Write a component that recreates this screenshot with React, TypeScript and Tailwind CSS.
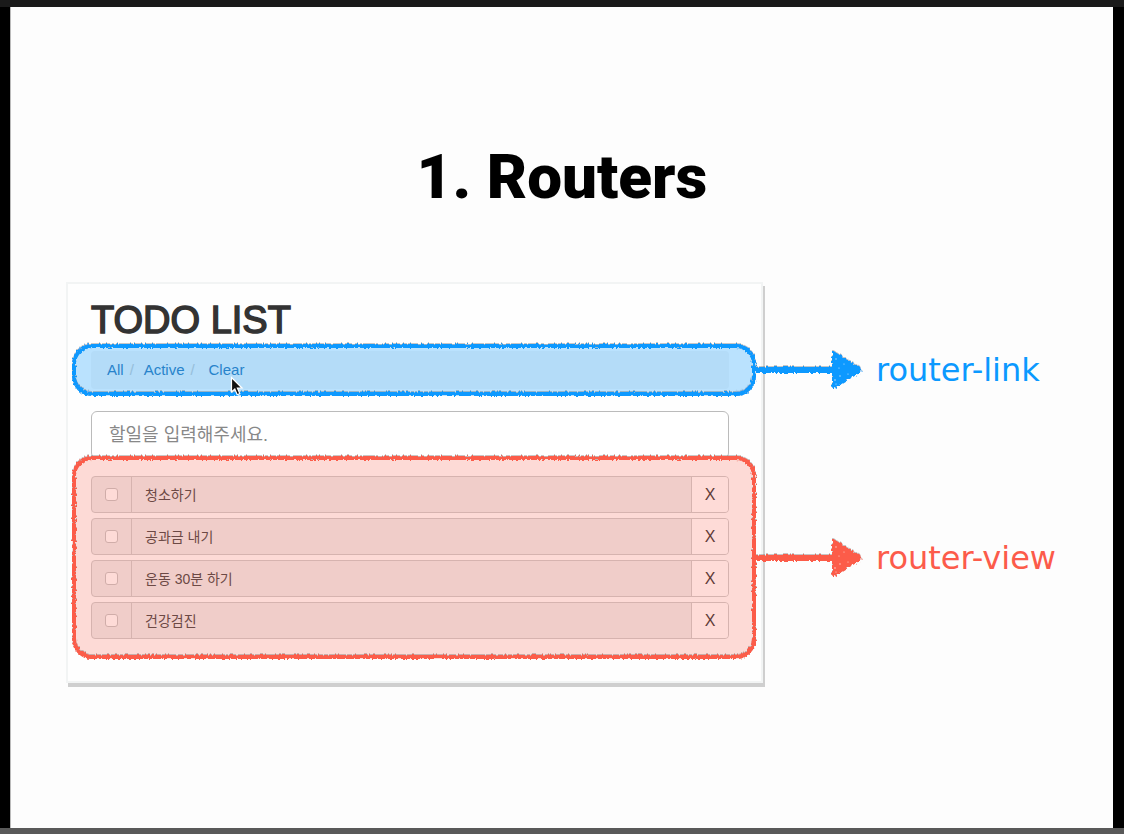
import React, { useState } from "react";

const TODOS = ["청소하기", "공과금 내기", "운동 30분 하기", "건강검진"];

function RoughFilter() {
  return (
    <svg className="absolute size-0" aria-hidden="true">
      <filter id="chalk" x="-5%" y="-20%" width="110%" height="140%">
        <feTurbulence type="fractalNoise" baseFrequency="0.45" numOctaves="2" seed="4" result="n" />
        <feDisplacementMap in="SourceGraphic" in2="n" scale="4" xChannelSelector="R" yChannelSelector="G" result="d" />
        <feDropShadow in="d" dx="0" dy="-0.6" stdDeviation="0.3" floodColor="#555" floodOpacity="0.55" />
      </filter>
    </svg>
  );
}

function Callout({ label }: { label: string }) {
  return (
    <div className="absolute left-full top-1/2 flex -translate-y-1/2 items-center gap-3">
      <svg className="h-12 w-27 shrink-0 overflow-visible" viewBox="0 0 108 48" fill="currentColor" aria-hidden="true">
        <g filter="url(#chalk)">
          <path d="M0 21H78V27H0z" />
          <path d="M76 6Q77 4 79 6L105 22Q107 24 105 26L79 42Q77 43 76 41z" />
        </g>
        <g fill="#fff" opacity="0.75">
          <circle cx="80" cy="13" r=".7" />
          <circle cx="84" cy="30" r=".7" />
          <circle cx="79" cy="34" r=".8" />
          <circle cx="88" cy="18" r=".6" />
          <circle cx="92" cy="28" r=".6" />
          <circle cx="83" cy="22" r=".6" />
          <circle cx="80" cy="38" r=".6" />
        </g>
      </svg>
      <span className="whitespace-nowrap font-['DejaVu_Sans',sans-serif] text-[32px] leading-10">{label}</span>
    </div>
  );
}

function Pointer() {
  return (
    <svg className="absolute left-[139px] top-[25px] z-10 h-5 w-3.5" viewBox="0 0 14 20" aria-hidden="true">
      <path d="M1.5 1.5V16L4.8 13L7.2 18.7L9.8 17.6L7.4 12H12z" fill="#111" stroke="#fff" strokeWidth="1.2" />
    </svg>
  );
}

export default function App() {
  const [done, setDone] = useState<boolean[]>(TODOS.map(() => false));

  return (
    <div className="flex min-h-screen flex-col bg-black font-['Liberation_Sans','Noto_Sans_CJK_KR',sans-serif]">
      <RoughFilter />
      <div className="h-[7px] bg-[#1a1a1a]" />
      <main className="mr-[11px] ml-2.5 flex-1 border-l border-[#bbb] bg-[#fdfdfd] pt-[134px]">
        <h1 className="text-center font-['Roboto',sans-serif] text-[62px] leading-[72px] font-black text-black">
          1. Routers
        </h1>

        <section className="mt-[69px] mr-[350px] ml-[55px] border-2 border-[#f2f4f4] bg-[#fefefe] pt-3.5 pr-8 pb-[42px] pl-[23px] shadow-[2px_4px_0_#cfcfcf]">
          <h2 className="text-[38px] leading-11 text-[#333] [-webkit-text-stroke:1.5px_#333]">TODO LIST</h2>

          <nav className="relative mt-[9px] rounded bg-[#f5f5f5] px-4 text-[15px] leading-[38px]">
            <ol className="flex text-[#337ab7]">
              <li><a href="#all">All</a></li>
              <li className="w-5 pl-1.5 text-[#ccc]" aria-hidden="true">/</li>
              <li><a href="#active">Active</a></li>
              <li className="w-6 pl-1.5 text-[#ccc]" aria-hidden="true">/</li>
              <li><a href="#clear">Clear</a></li>
            </ol>
            <Pointer />
            <div className="pointer-events-none absolute -inset-y-[7px] -right-[27px] -left-[19px] text-[#0b99ff]">
              <div className="absolute inset-0 rounded-[20px] bg-[#0b99ff]/28" />
              <div className="absolute inset-0 rounded-[20px] border-4 border-current [filter:url(#chalk)]" />
              <Callout label="router-link" />
            </div>
          </nav>

          <input
            type="text"
            aria-label="할일"
            placeholder="할일을 입력해주세요."
            className="mt-[22px] block h-12 w-full rounded-md border border-[#bbb] bg-white px-[17px] text-lg text-[#555] placeholder:text-[#888]"
          />

          <div className="relative mt-[17px]">
            <ul className="flex flex-col gap-[5px] text-sm text-[#333]">
              {TODOS.map((todo, i) => (
                <li key={todo} className="flex h-[37px] overflow-hidden rounded border border-[#ccc] bg-[#eee]">
                  <span className="flex w-10 items-center justify-center border-r border-[#ccc]">
                    <input
                      id={`todo-${i}`}
                      type="checkbox"
                      checked={done[i]}
                      onChange={() => setDone(done.map((d, j) => (j === i ? !d : d)))}
                      className="size-[13px] appearance-none rounded-[3px] border border-[#c4c4c4] bg-white checked:bg-[#337ab7]"
                    />
                  </span>
                  <label htmlFor={`todo-${i}`} className="flex flex-1 items-center px-[13px] text-[#444]">{todo}</label>
                  <button type="button" aria-label={`${todo} X`} className="w-[37px] border-l border-[#ccc] bg-white text-base">
                    X
                  </button>
                </li>
              ))}
            </ul>
            <div className="pointer-events-none absolute -inset-y-5 -right-[27px] -left-[19px] text-[#fc5b4a]">
              <div className="absolute inset-0 rounded-[20px] bg-[#fc5b4a]/22" />
              <div className="absolute inset-0 rounded-[20px] border-4 border-current [filter:url(#chalk)]" />
              <Callout label="router-view" />
            </div>
          </div>
        </section>
      </main>
      <div className="h-1.5 bg-[#595959]" />
    </div>
  );
}
